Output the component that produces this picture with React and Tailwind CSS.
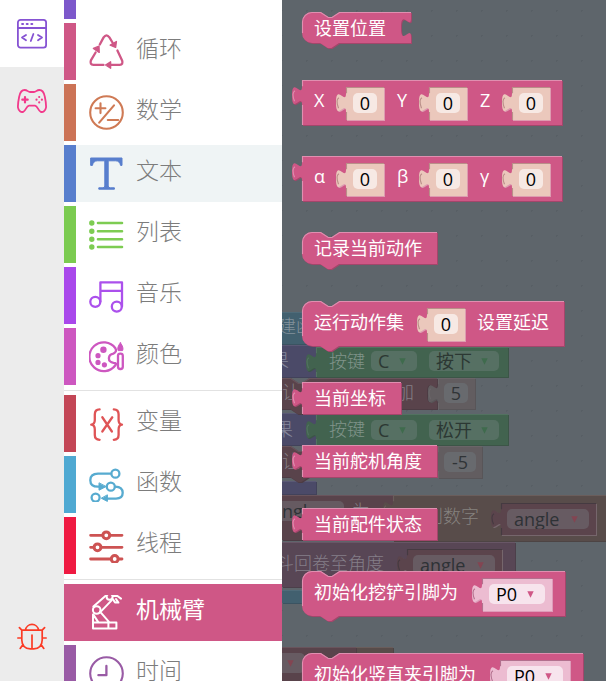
import React from "react";

/* ---------- category icons, drawn on a 35 x 35 grid ---------- */

function Icon({ className, children }) {
  return (
    <svg
      viewBox="0 0 35 35"
      className={`size-[35px] shrink-0 ${className}`}
      fill="none"
      stroke="currentColor"
      strokeWidth="2.3"
      strokeLinecap="round"
      strokeLinejoin="round"
      aria-hidden="true"
    >
      {children}
    </svg>
  );
}

const icons = {
  loop: (
    <>
      <path d="M10.8 10.5 14.6 3.4Q17.5-.8 20.4 3.4L23.8 9" />
      <path d="M6.6 18.5 1.9 26.4Q.6 30.6 4.4 30.9H14.5" />
      <path d="M22 30.9H30.8Q34.4 30.6 33.1 26.4L28.4 16.5" />
      <path d="M27.4 7.6 26.6 13.4 21.2 11.2ZM4.4 14.4 10 12.2 10.2 18.4ZM16.6 31 21.6 27.8V34.2Z" fill="currentColor" strokeWidth="1.4" />
    </>
  ),
  math: (
    <>
      <circle cx="17.5" cy="17.5" r="16.3" strokeWidth="2.1" />
      <path d="M6.6 13.2H16.4M11.5 8.3V18.1M25 10.4 10.2 27.6M18.8 25H29.2" strokeWidth="2.1" />
    </>
  ),
  text: (
    <path
      d="M2 2H33V9.4H31.6Q30.6 4.8 26.6 4.8H19.2V30Q19.2 31.8 21.2 31.8H25.4V33.2H9.8V31.8H14Q15.8 31.8 15.8 30V4.8H8.4Q4.4 4.8 3.4 9.4H2Z"
      fill="currentColor"
      strokeWidth="1"
    />
  ),
  list: (
    <>
      <path d="M9 6H33M9 14.3H33M9 22.3H33M9 30H33" strokeWidth="2.6" />
      <path d="M2.8 6h.01M2.8 14.3h.01M2.8 22.3h.01M2.8 30h.01" strokeWidth="5.4" />
    </>
  ),
  music: (
    <>
      <path d="M11.4 23.5V4.4H33V28.4M11.4 12.8H33" />
      <circle cx="6.3" cy="23.8" r="5" />
      <circle cx="27.8" cy="28.6" r="5" />
    </>
  ),
  color: (
    <>
      <path d="M26.4 9.2A14.4 14.4 0 1 0 26.4 26.2Q28 24 24.6 23.8 19.4 23 20 18.6 20.2 15.4 24.4 14.6 28.2 13 26.4 9.2Z" />
      <path d="M14.4 10.7h.01" strokeWidth="6.4" />
      <path d="M9 16.7h.01M9 23.4h.01M15.4 25.8h.01" strokeWidth="5.2" />
      <rect x="29" y="14.6" width="4.8" height="15.4" rx="2.2" />
      <path d="M31.4 3.8Q27.6 8.6 29.2 11.6H33.6Q35 8.6 31.4 3.8Z" fill="currentColor" strokeWidth="1" />
    </>
  ),
  variable: (
    <>
      <path d="M10.6 3.4Q5.8 3.4 5.8 8.4V14Q5.8 18.2 2.2 18.7 5.8 19.2 5.8 23.4V29Q5.8 33.6 10.6 33.8" />
      <path d="M24.8 3.4Q29.6 3.4 29.6 8.4V14Q29.6 18.2 33 18.7 29.6 19.2 29.6 23.4V29Q29.6 33.6 24.8 33.8" />
      <path d="M13.4 11.4 22.8 25.4M23.2 11.4 13.4 25.4" strokeWidth="2.5" />
    </>
  ),
  func: (
    <>
      <path d="M22 6.7H9Q1.3 7 1.3 13.2 1.3 19.6 9 19.7H11M26.2 19.7Q33.7 20 33.7 25.8 33.7 31.6 27 31.6H17" />
      <circle cx="26.4" cy="6.7" r="4" />
      <circle cx="21.8" cy="19.7" r="4" />
      <circle cx="6.6" cy="30.6" r="4" />
      <path d="M10 16.2V23.2L16.8 19.7ZM18.4 28.2V34.4L12.6 31.4Z" fill="currentColor" strokeWidth="1" />
    </>
  ),
  thread: (
    <>
      <path d="M1.6 7.3H13.6M21 7.3H33M1.6 19.3H4.8M12.2 19.3H33M1.6 31H22M29.4 31H33" strokeWidth="2.8" />
      <g strokeWidth="3">
        <circle cx="17.3" cy="7.3" r="3.4" />
        <circle cx="8.5" cy="19.3" r="3.4" />
        <circle cx="25.7" cy="31" r="3.4" />
      </g>
    </>
  ),
  arm: (
    <g strokeWidth="2">
      <path d="M4 27.6H27.4V33.4H4ZM19.4 27.8V33.2M4 27.6V19.4M11 16.6 20.4 27.4M4.2 19.4 9.4 27.4M4.4 11.6 16.4 1M10.8 17.6 22.6 5.4" />
      <circle cx="7.7" cy="15" r="3.8" />
      <circle cx="20.6" cy="1.8" r="3" />
      <path d="M24 1H28.4M24 4.4 26 7.4 29.4 7.6 27 4M28.4 1 32 3.6" />
    </g>
  ),
  time: (
    <>
      <circle cx="17.5" cy="17.5" r="16.3" strokeWidth="2.1" />
      <path d="M17.4 10V19.2H9.4" />
    </>
  ),
};

const groups = [
  [
    { label: "逻辑", bar: "bg-[#7d58cb]", tint: "text-[#7d58cb]" },
    { label: "循环", icon: "loop", bar: "bg-[#cf5786]", tint: "text-[#cf5786]" },
    { label: "数学", icon: "math", bar: "bg-[#cc7356]", tint: "text-[#cf7a55]" },
    { label: "文本", icon: "text", bar: "bg-[#587ecd]", tint: "text-[#587ecd]", hover: true },
    { label: "列表", icon: "list", bar: "bg-[#7bcb50]", tint: "text-[#7dcc52]" },
    { label: "音乐", icon: "music", bar: "bg-[#a948eb]", tint: "text-[#ab50ec]" },
    { label: "颜色", icon: "color", bar: "bg-[#cd57c0]", tint: "text-[#cd57c0]" },
  ],
  [
    { label: "变量", icon: "variable", bar: "bg-[#c34656]", tint: "text-[#df5456]" },
    { label: "函数", icon: "func", bar: "bg-[#4fa9d2]", tint: "text-[#57abd0]" },
    { label: "线程", icon: "thread", bar: "bg-[#ef1a42]", tint: "text-[#cd5353]" },
  ],
  [
    { label: "机械臂", icon: "arm", bar: "bg-[#cf5786]", tint: "text-white", selected: true },
    { label: "时间", icon: "time", bar: "bg-[#995ba5]", tint: "text-[#995ba5]" },
  ],
];

function Category({ label, icon, bar, tint, hover, selected }) {
  const fill = selected ? "bg-[#cf5786]" : hover ? "bg-[#eff4f5]" : "bg-white";
  const text = selected ? "font-normal text-white" : "font-light text-[#7c7c7c]";
  return (
    <button type="button" className={`flex h-[57px] w-full shrink-0 items-stretch text-left ${fill}`}>
      <span className={`w-3 shrink-0 ${bar}`} />
      <span className="flex items-start gap-3 pt-[11px] pl-[13px]">
        <Icon className={tint}>{icons[icon]}</Icon>
        <span className={`text-[23px] leading-[29px] ${text}`}>{label}</span>
      </span>
    </button>
  );
}

/* ---------- blocks ---------- */

const palettes = {
  arm: { body: "fill-[#cf5786]", shade: "fill-[#a3466b]", edge: "stroke-[#e08fb0]", text: "text-white" },
  number: { body: "fill-[#ebc8bc]", shade: "fill-[#dd9cb0]", edge: "stroke-[#b98f88]", field: "bg-[#f7e9e4]", text: "text-black" },
  pin: { body: "fill-[#ecbcd1]", shade: "fill-[#dd9cb9]", edge: "stroke-[#b3708e]", field: "bg-[#f7e4ed]", text: "text-black", arrow: "fill-[#cf5786]" },
  dimTeal: { body: "fill-[#42606f]", shade: "fill-[#3b5361]", edge: "stroke-[#4f6b79]", text: "text-[#82919b]" },
  dimPurple: { body: "fill-[#4b4a68]", shade: "fill-[#42425a]", edge: "stroke-[#5a5975]", text: "text-[#83869a]" },
  dimRed: { body: "fill-[#59434b]", shade: "fill-[#4d3c44]", edge: "stroke-[#69545c]", field: "bg-[#665a61]", text: "text-[#857f86]", fieldText: "text-[#2e3236]", arrow: "fill-[#59434b]" },
  dimGreen: { body: "fill-[#42634f]", shade: "fill-[#3c5547]", edge: "stroke-[#527260]", field: "bg-[#567063]", text: "text-[#80948a]", fieldText: "text-[#2c3833]", arrow: "fill-[#3f6b4d]" },
  dimNumber: { body: "fill-[#625d60]", shade: "fill-[#585558]", edge: "stroke-[#6a6568]", field: "bg-[#686a6e]", text: "text-[#303437]" },
  dimBrown: { body: "fill-[#584c4a]", shade: "fill-[#4d4444]", edge: "stroke-[#6a5d5b]", text: "text-[#86827f]" },
  dimInner: { body: "fill-[#5b444c]", shade: "fill-[#76666c]", edge: "stroke-[#453a41]", field: "bg-[#675b62]", text: "text-[#2e3236]", arrow: "fill-[#834552]" },
  dimMauve: { body: "fill-[#584655]", shade: "fill-[#4c3f4a]", edge: "stroke-[#685666]", text: "text-[#857f89]" },
};

const UNIT = 1.25;
const SOCKET = "v5c0 10-8-8-8 7.5s8-2.5 8 7.5";

function outline(shape, w, h, socket) {
  const right = socket ? `V0${SOCKET}V${h}` : `V${h}`;
  if (shape === "stack") {
    return `M0 8A8 8 0 0 1 8 0H15l6 4 3 0 6-4H${w}${right}H29.5l-6 4-3 0-6-4H8A8 8 0 0 1 0 ${h - 8}Z`;
  }
  if (shape === "value") {
    return `M0 0H${w}${right}H0V20c0-10-8 8-8-7.5s8 2.5 8-7.5Z`;
  }
  return `M0 0H${w}${right}H0Z`;
}

function rim(shape, w, h) {
  if (shape === "stack") {
    return `M.4 ${h - 8}V8A7.6 7.6 0 0 1 8 .4H15l6 4 3 0 6-4H${w}`;
  }
  if (shape === "value") {
    return `M.4 ${h}V20M-6 17Q-8.6 10-5.6 8.6M.4 5V.4H${w}`;
  }
  return `M0 .4H${w}`;
}

function Block({ shape = "plain", tone, width, height, socket, className = "", children }) {
  const p = palettes[tone];
  const w = width / UNIT;
  const h = height / UNIT;
  return (
    <div className={`flex items-start ${p.text} ${className}`}>
      <svg width={width} height={height} className="absolute top-0 left-0 overflow-visible" aria-hidden="true">
        <g transform={`scale(${UNIT})`}>
          <path d={outline(shape, w, h, socket)} transform="translate(0.8 0.8)" className={p.shade} />
          <path d={outline(shape, w, h, socket)} className={p.body} />
          <path d={rim(shape, w, h)} fill="none" strokeWidth="0.9" className={p.edge} />
        </g>
      </svg>
      {children}
    </div>
  );
}

function Label({ className = "", children }) {
  return <span className={`relative text-[18px] whitespace-nowrap ${className}`}>{children}</span>;
}

function NumberField({ tone = "number", value, label, className = "w-6" }) {
  const p = palettes[tone];
  return (
    <input
      type="text"
      defaultValue={value}
      aria-label={label}
      className={`relative h-5 rounded-[5px] p-0 text-center text-[18px] leading-5 font-normal ${p.field} ${p.text} ${className}`}
    />
  );
}

function Dropdown({ tone, value, label, className = "" }) {
  const p = palettes[tone];
  return (
    <span className={`relative h-5 shrink-0 ${className}`}>
      <select
        defaultValue={value}
        aria-label={label}
        className={`block h-5 w-full appearance-none rounded-[5px] py-0 pr-0 pl-[7px] text-[18px] leading-5 font-normal ${p.field} ${p.fieldText || p.text}`}
      >
        <option>{value}</option>
      </select>
      <svg viewBox="0 0 7 7" className={`pointer-events-none absolute top-[7px] right-[11px] size-[7px] ${p.arrow}`} aria-hidden="true">
        <path d="M.3 .3H6.7L3.5 6.7Z" />
      </svg>
    </span>
  );
}

function NumberBlock({ label, className = "mr-3" }) {
  return (
    <Block shape="value" tone="number" width={38} height={33} className={`relative mt-[7px] h-[33px] w-[39px] shrink-0 pt-[6px] pl-[7px] ${className}`}>
      <NumberField value="0" label={label} />
    </Block>
  );
}

function PinBlock({ label }) {
  return (
    <Block shape="value" tone="pin" width={70} height={33} className="relative mt-[7px] h-[33px] w-[70px] shrink-0 pt-[6px] pl-[7px]">
      <Dropdown tone="pin" value="P0" label={label} className="w-[56px]" />
    </Block>
  );
}

function AxisBlock({ axes, className }) {
  return (
    <Block shape="value" tone="arm" width={260} height={45} className={`absolute pl-3 ${className}`}>
      {axes.map((axis) => (
        <React.Fragment key={axis}>
          <Label className="w-8 leading-[41px]">{axis}</Label>
          <NumberBlock label={axis} />
        </React.Fragment>
      ))}
    </Block>
  );
}

/* Program blocks lying behind the open drawer */
function Workspace() {
  return (
    <div className="absolute inset-0 font-light">
      <Block shape="stack" tone="dimTeal" width={200} height={32} className="absolute top-[312px] left-[-60px] pl-[56px]">
        <Label className="leading-[29px]">建函</Label>
      </Block>

      <Block tone="dimPurple" width={100} height={32} className="absolute top-[345px] left-[-66px] pl-[55px]">
        <Label className="leading-[31px]">果</Label>
      </Block>
      <Block tone="dimPurple" width={100} height={32} className="absolute top-[413px] left-[-66px] pl-[59px]">
        <Label className="leading-[32px]">果</Label>
      </Block>
      <Block tone="dimPurple" width={100} height={13} className="absolute top-[481px] left-[-66px]" />
      <Block shape="value" tone="dimGreen" width={192} height={30} className="absolute top-[347px] left-[34px] pl-[13px]">
        <Label className="mr-[6px] leading-[28px]">按键</Label>
        <Dropdown tone="dimGreen" value="C" label="按键" className="mt-1 mr-3 w-[46px]" />
        <Dropdown tone="dimGreen" value="按下" label="状态" className="mt-1 w-[70px]" />
      </Block>
      <Block shape="value" tone="dimGreen" width={192} height={31} className="absolute top-[414px] left-[34px] pl-[13px]">
        <Label className="mr-[6px] leading-[30px]">按键</Label>
        <Dropdown tone="dimGreen" value="C" label="按键" className="mt-[6px] mr-3 w-[46px]" />
        <Dropdown tone="dimGreen" value="松开" label="状态" className="mt-[6px] w-[70px]" />
      </Block>

      <Block shape="stack" tone="dimRed" width={165} height={31} socket className="absolute top-[378px] left-[-10px] pl-[10px]">
        <Label className="mr-[96px] leading-[29px]">让</Label>
        <Label className="leading-[29px]">加</Label>
      </Block>
      <Block shape="value" tone="dimNumber" width={37} height={31} className="absolute top-[378px] left-[156px] pt-[5px] pl-[6px]">
        <NumberField tone="dimNumber" value="5" label="增量" />
      </Block>
      <Block shape="stack" tone="dimRed" width={165} height={31} socket className="absolute top-[446px] left-[-10px] pl-[10px]">
        <Label className="leading-[31px]">让</Label>
      </Block>
      <Block shape="value" tone="dimNumber" width={44} height={32} className="absolute top-[446px] left-[156px] pt-[6px] pl-[6px]">
        <NumberField tone="dimNumber" value="-5" label="增量" className="w-8" />
      </Block>

      <Block tone="dimRed" width={111} height={45} className="absolute top-[495px] left-0 pt-[6px]">
        <Dropdown tone="dimRed" value="ngle" label="变量" className="-ml-[7px] w-[69px]" />
        <Label className="ml-2 leading-5">为</Label>
      </Block>
      <Block shape="value" tone="dimBrown" width={230} height={46} className="absolute top-[495px] left-[111px] pl-8">
        <Label className="mr-[22px] leading-[42px]">到数字</Label>
        <Block shape="value" tone="dimInner" width={95} height={32} className="relative mt-2 w-[95px] shrink-0 pt-[6px] pl-[6px]">
          <Dropdown tone="dimInner" value="angle" label="变量" className="w-[82px]" />
        </Block>
      </Block>

      <Block tone="dimMauve" width={233} height={45} className="absolute top-[542px] left-0">
        <Label className="-ml-[6px] mr-[23px] leading-[42px]">斗回卷至角度</Label>
        <Block shape="value" tone="dimInner" width={95} height={32} className="relative mt-[7px] w-[95px] shrink-0 pt-[6px] pl-[6px]">
          <Dropdown tone="dimInner" value="angle" label="变量" className="w-[82px]" />
        </Block>
      </Block>
      <Block tone="dimTeal" width={100} height={13} className="absolute top-[590px] left-0" />

      <Block tone="dimBrown" width={37} height={40} className="absolute top-[647px] left-[74px]" />
      <Block tone="dimRed" width={74} height={40} className="absolute top-[647px] left-0 pt-[6px]">
        <Dropdown tone="dimInner" value="" label="变量" className="-ml-[7px] w-[30px]" />
      </Block>
    </div>
  );
}

function Drawer() {
  return (
    <div className="absolute inset-0">
      <Block shape="stack" tone="arm" width={109} height={31} socket className="absolute top-3 left-5 pl-3">
        <Label className="leading-[33px]">设置位置</Label>
      </Block>
      <AxisBlock axes={["X", "Y", "Z"]} className="top-20 left-5" />
      <AxisBlock axes={["α", "β", "γ"]} className="top-[156px] left-5" />
      <Block shape="stack" tone="arm" width={135} height={32} className="absolute top-[232px] left-5 pl-3">
        <Label className="leading-[33px]">记录当前动作</Label>
      </Block>
      <Block shape="stack" tone="arm" width={262} height={45} className="absolute top-[301px] left-5 pl-3">
        <Label className="mr-[23px] leading-[43px]">运行动作集</Label>
        <NumberBlock label="运行动作集" className="mr-[11px]" />
        <Label className="leading-[43px]">设置延迟</Label>
      </Block>
      <Block shape="value" tone="arm" width={99} height={32} className="absolute top-[382px] left-5 pl-3">
        <Label className="leading-[33px]">当前坐标</Label>
      </Block>
      <Block shape="value" tone="arm" width={135} height={32} className="absolute top-[445px] left-5 pl-3">
        <Label className="leading-[33px]">当前舵机角度</Label>
      </Block>
      <Block shape="value" tone="arm" width={135} height={32} className="absolute top-[508px] left-5 pl-3">
        <Label className="leading-[33px]">当前配件状态</Label>
      </Block>
      <Block shape="stack" tone="arm" width={263} height={45} className="absolute top-[571px] left-5 pl-3">
        <Label className="mr-6 leading-[43px]">初始化挖铲引脚为</Label>
        <PinBlock label="挖铲引脚" />
      </Block>
      <Block shape="stack" tone="arm" width={281} height={45} className="absolute top-[653px] left-5 pl-3">
        <Label className="mr-6 leading-[43px]">初始化竖直夹引脚为</Label>
        <PinBlock label="竖直夹引脚" />
      </Block>
    </div>
  );
}

function ModeBar() {
  return (
    <nav className="flex w-16 shrink-0 flex-col bg-[#ececec]">
      <button type="button" aria-label="代码" className="flex h-[67px] items-center justify-center bg-white">
        <svg viewBox="0 0 30 30" className="size-[30px] text-[#8653d3]" fill="none" stroke="currentColor" strokeWidth="1.8" strokeLinecap="round" strokeLinejoin="round">
          <rect x="0.9" y="0.9" width="28.2" height="27.8" rx="2.6" />
          <path d="M1 9H29M9 16 5 18.6 9 21.2M21 16 25 18.6 21 21.2M16.4 15 13.8 22" />
          <path d="M5.2 5h.8M9.8 5h.8M14.4 5h.8" strokeWidth="2.2" />
        </svg>
      </button>
      <button type="button" aria-label="遥控" className="flex h-[67px] items-center justify-center">
        <svg viewBox="0 0 30 24" className="h-6 w-[30px] text-[#f23a8b]" fill="none" stroke="currentColor" strokeWidth="1.8" strokeLinecap="round" strokeLinejoin="round">
          <path d="M7.6 1C10.4 1 11 3 13 3H17C19 3 19.6 1 22.4 1 25.4 1 27 3.6 27.8 7.6 28.6 11.6 29.4 15.4 29 18.6 28.4 22 26 23.6 23.8 22.8 21 21.6 20.8 17 18 16.6H12C9.2 17 9 21.6 6.2 22.8 4 23.6 1.6 22 1 18.6.6 15.4 1.4 11.6 2.2 7.6 3 3.6 4.6 1 7.6 1Z" />
          <path d="M8 8V13.4M5.3 10.7H10.7" strokeWidth="2.2" />
          <path d="M22.2 8h.01M22.2 13.4h.01M19.5 10.7h.01M24.9 10.7h.01" strokeWidth="2.2" />
        </svg>
      </button>
      <button type="button" aria-label="调试" className="mt-auto mb-3 flex h-[67px] items-center justify-center">
        <svg viewBox="0 0 30 28" className="h-7 w-[30px] text-[#fb3b25]" fill="none" stroke="currentColor" strokeWidth="1.7" strokeLinecap="round" strokeLinejoin="round">
          <path d="M8.4 8.2A6.7 7 0 0 1 21.6 8.2M4.8 8.2H25.2V18Q25 26.6 16.6 26.8H13.4Q5 26.6 4.8 18ZM4.8 8.2 2.4 5.6M25.2 8.2 27.6 5.6M.8 16H4.8M25.2 16H29.2M6 22.4 3.2 26.4M24 22.4 26.8 26.4M15 13V26.4" />
        </svg>
      </button>
    </nav>
  );
}

export default function App() {
  return (
    <div className="flex h-screen overflow-hidden bg-white font-['Open_Sans','Noto_Sans_CJK_SC',sans-serif]">
      <ModeBar />
      <aside className="w-[218px] shrink-0 overflow-hidden bg-white">
        <div className="-mt-[38px]">
          {groups.map((group, i) => (
            <div key={group[0].label} className={i > 0 ? "mt-[5px] border-t border-[#e2e2e2] pt-1" : ""}>
              <div className="flex flex-col gap-1">
                {group.map((item) => (
                  <Category key={item.label} {...item} />
                ))}
              </div>
            </div>
          ))}
        </div>
      </aside>
      <main className="relative min-w-0 flex-1 overflow-hidden bg-[#5e656b] bg-[radial-gradient(circle_at_center,#585f65_1px,transparent_1px)] bg-[size:25px_25px] bg-[position:12px_-2px]">
        <Workspace />
        <Drawer />
      </main>
    </div>
  );
}
